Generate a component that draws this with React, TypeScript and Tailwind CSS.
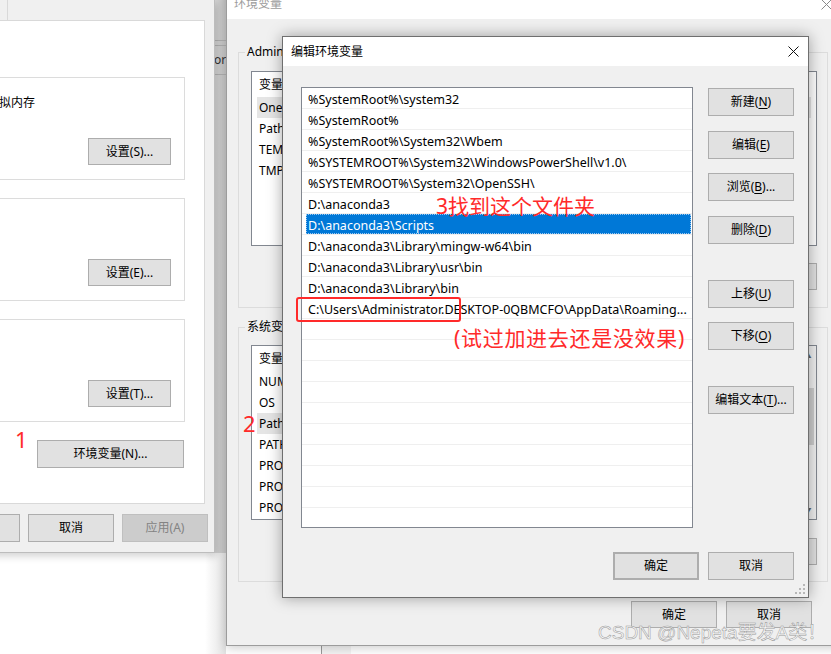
import React from 'react';

const FONT = "font-['Noto_Sans','Noto_Sans_CJK_SC',sans-serif]";

function CloseIcon({ color }: { color: string }) {
  return (
    <svg width="11" height="11" viewBox="0 0 11 11">
      <path d="M0.5 0.5L10.5 10.5M10.5 0.5L0.5 10.5" stroke={color} strokeWidth="1" fill="none" />
    </svg>
  );
}

function Btn({
  children, className = '', disabled = false,
}: { children: React.ReactNode; className?: string; disabled?: boolean }) {
  return (
    <div
      className={`flex shrink-0 items-center justify-center border text-[12px] leading-none ${
        disabled ? 'bg-[#cccccc] border-[#bfbfbf] text-[#838383]' : 'bg-[#e1e1e1] border-[#adadad] text-black'
      } ${className}`}
    >
      {children}
    </div>
  );
}

function Key({ k }: { k: string }) {
  return <span className="underline underline-offset-2">{k}</span>;
}

const dialogPaths = [
  '%SystemRoot%\\system32',
  '%SystemRoot%',
  '%SystemRoot%\\System32\\Wbem',
  '%SYSTEMROOT%\\System32\\WindowsPowerShell\\v1.0\\',
  '%SYSTEMROOT%\\System32\\OpenSSH\\',
  'D:\\anaconda3',
  'D:\\anaconda3\\Scripts',
  'D:\\anaconda3\\Library\\mingw-w64\\bin',
  'D:\\anaconda3\\Library\\usr\\bin',
  'D:\\anaconda3\\Library\\bin',
  'C:\\Users\\Administrator.DESKTOP-0QBMCFO\\AppData\\Roaming...',
];

const userVars = [
  { name: 'OneDrive', value: 'C:\\Users\\Administrator\\OneDrive', sel: true },
  { name: 'Path', value: 'C:\\Users\\Administrator\\AppData\\Local\\Microsoft\\WindowsApps;' },
  { name: 'TEMP', value: 'C:\\Users\\Administrator\\AppData\\Local\\Temp' },
  { name: 'TMP', value: 'C:\\Users\\Administrator\\AppData\\Local\\Temp' },
];

const sysVars = [
  { name: 'NUMBER_OF_PROCESSORS', value: '8' },
  { name: 'OS', value: 'Windows_NT' },
  { name: 'Path', value: 'C:\\Windows\\system32;C:\\Windows;C:\\Windows\\System32\\Wbem;', sel: true },
  { name: 'PATHEXT', value: '.COM;.EXE;.BAT;.CMD;.VBS;.VBE;.JS;.JSE;.WSF;.WSH;.MSC' },
  { name: 'PROCESSOR_ARCHITECTURE', value: 'AMD64' },
  { name: 'PROCESSOR_IDENTIFIER', value: 'Intel64 Family 6 Model 158 Stepping 10, GenuineIntel' },
  { name: 'PROCESSOR_LEVEL', value: '6' },
];

function VarList({
  rows, scroll = false,
}: { rows: { name: string; value: string; sel?: boolean }[]; scroll?: boolean }) {
  return (
    <div className="flex h-[175px] ml-[12px] mr-[10px] border border-[#828790] bg-white overflow-hidden">
      <div className="flex-1 flex flex-col">
        <div className="h-[25px] shrink-0 flex items-center pl-[7px]">
          <span className="w-[150px]">变量</span>
          <span>值</span>
        </div>
        {rows.map((r) => (
          <div
            key={r.name}
            className={`h-[21px] shrink-0 flex items-center mx-[5px] pl-[2px] whitespace-nowrap overflow-hidden ${r.sel ? 'bg-[#e5e5e5]' : ''}`}
          >
            <span className="w-[150px] shrink-0">{r.name}</span>
            <span>{r.value}</span>
          </div>
        ))}
      </div>
      {scroll && (
        <div className="w-[17px] shrink-0 flex flex-col items-center bg-[#f0f0f0]">
          <div className="h-[17px] flex items-center justify-center text-[#606060] text-[8px]">▲</div>
          <div className="mt-[25px] w-[13px] h-[57px] bg-[#cdcdcd]" />
          <div className="flex-1" />
          <div className="h-[17px] flex items-center justify-center text-[#606060] text-[8px]">▼</div>
        </div>
      )}
    </div>
  );
}

function App() {
  return (
    <div className={`relative w-[831px] h-[654px] overflow-hidden bg-white text-[12px] text-black ${FONT}`}>
      {/* window partly seen behind the two dialogs */}
      <div className="absolute left-[205px] top-0 w-[21px] h-[553px] bg-gradient-to-r from-[#e4e4e4] to-[#c4c4c4] flex flex-col">
        <div className="mt-[40px] h-[6px] border-y border-[#b0b0b0]" />
        <div className="mt-[6px] pl-[9px] text-[#333] leading-[16px] whitespace-nowrap overflow-hidden">or</div>
        <div className="mt-[6px] border-t border-[#b0b0b0]" />
      </div>
      <div className="absolute left-[205px] top-[553px] w-[21px] h-[101px] bg-gradient-to-r from-white to-[#e2e2e2]" />
      <div className="absolute left-[321px] top-[600px] w-[30px] h-[60px] border-l border-[#9a9a9a] bg-[#f4f4f4]" />

      {/* 系统属性 */}
      <div className="absolute left-[-60px] top-0 w-[275px] h-[553px] flex flex-col bg-[#f0f0f0] border-r border-b border-[#bdbdbd] shadow-[2px_3px_8px_rgba(0,0,0,0.18)]">
        <div className="h-[20px] shrink-0 flex">
          <div className="w-[68px] border-r border-[#d9d9d9]" />
        </div>
        <div className="ml-[26px] mr-[9px] h-[484px] shrink-0 bg-white border border-[#d9d9d9] flex flex-col">
          {[
            { text: '虚拟内存', btn: 'S', mt: 'mt-[56px]' },
            { text: '', btn: 'E', mt: 'mt-[18px]' },
            { text: '', btn: 'T', mt: 'mt-[18px]' },
          ].map((g) => (
            <div key={g.btn} className={`${g.mt} ml-[10px] mr-[19px] border border-[#dcdcdc] pt-[17px] pb-[14px] pl-[9px] pr-[13px] flex flex-col`}>
              <div className="h-[16px] leading-[16px] whitespace-nowrap">{g.text}</div>
              <Btn className="self-end mt-[27px] w-[83px] h-[27px]">
                设置({g.btn})...
              </Btn>
            </div>
          ))}
          <Btn className="self-end mt-[18px] mr-[20px] w-[147px] h-[28px]">环境变量(N)...</Btn>
        </div>
        <div className="mt-[10px] flex justify-end gap-[8px] pr-[6px]">
          <Btn className="w-[86px] h-[28px]">确定</Btn>
          <Btn className="w-[86px] h-[28px]">取消</Btn>
          <Btn disabled className="w-[86px] h-[28px]">应用(A)</Btn>
        </div>
      </div>

      {/* 环境变量 */}
      <div className="absolute left-[226px] top-[-12px] w-[616px] flex flex-col bg-[#f0f0f0] border border-[#9c9c9c] shadow-[0_2px_10px_rgba(0,0,0,0.2)]">
        <div className="h-[30px] shrink-0 bg-white flex items-center justify-between pl-[7px] pr-[9px]">
          <span className="text-[#9c9c9c]">环境变量</span>
          <CloseIcon color="#8a8a8a" />
        </div>
        <div className="flex flex-col pl-[11px] pr-[13px] pb-[17px]">
          <fieldset className="mt-[25px] border border-[#dcdcdc] p-0 min-w-0">
            <legend className="ml-[6px] px-[2px] leading-[16px]">Administrator 的用户变量(U)</legend>
            <div className="mt-[11px]">
              <VarList rows={userVars} />
            </div>
            <div className="mt-[17px] mb-[17px] mr-[10px] flex justify-end gap-[9px]">
              <Btn className="w-[86px] h-[27px]">新建(N)...</Btn>
              <Btn className="w-[86px] h-[27px]">编辑(E)...</Btn>
              <Btn className="w-[86px] h-[27px]">删除(D)</Btn>
            </div>
          </fieldset>
          <fieldset className="mt-[11px] border border-[#dcdcdc] p-0 min-w-0">
            <legend className="ml-[6px] px-[2px] leading-[16px]">系统变量(S)</legend>
            <div className="mt-[10px]">
              <VarList rows={sysVars} scroll />
            </div>
            <div className="mt-[18px] mb-[16px] mr-[10px] flex justify-end gap-[9px]">
              <Btn className="w-[86px] h-[27px]">新建(W)...</Btn>
              <Btn className="w-[86px] h-[27px]">编辑(I)...</Btn>
              <Btn className="w-[86px] h-[27px]">删除(L)</Btn>
            </div>
          </fieldset>
          <div className="mt-[19px] mr-[16px] flex justify-end gap-[9px]">
            <Btn className="w-[86px] h-[27px]">确定</Btn>
            <Btn className="w-[86px] h-[27px]">取消</Btn>
          </div>
        </div>
      </div>

      {/* 编辑环境变量 */}
      <div className="absolute left-[282px] top-[36px] w-[527px] h-[562px] flex flex-col bg-[#f0f0f0] border border-[#6f6f6f] shadow-[0_0_14px_rgba(0,0,0,0.35)]">
        <div className="h-[29px] shrink-0 bg-white flex items-center justify-between pl-[8px] pr-[9px]">
          <span>编辑环境变量</span>
          <CloseIcon color="#111111" />
        </div>
        <div className="mt-[21px] ml-[18px] flex">
          <div className="w-[392px] h-[441px] border border-[#828790] bg-white overflow-hidden flex flex-col text-[12.5px]">
            {Array.from({ length: 21 }).map((_, i) => {
              const p = dialogPaths[i] ?? '';
              const sel = i === 6;
              return (
                <div key={i} className="h-[21px] shrink-0 border-b border-[#efefef] pl-[4px] pr-[1px]">
                  <div
                    className={`h-full pl-[2px] pt-[2px] leading-[20px] whitespace-nowrap overflow-hidden ${
                      sel ? 'bg-[#0078d7] text-white outline-1 outline-dotted outline-[#9cc8f0] -outline-offset-1' : ''
                    }`}
                  >
                    {p}
                  </div>
                </div>
              );
            })}
          </div>
          <div className="ml-[15px] w-[86px] flex flex-col">
            <Btn className="mt-[1px] w-[86px] h-[28px]">新建(<Key k="N" />)</Btn>
            <Btn className="mt-[15px] w-[86px] h-[28px]">编辑(<Key k="E" />)</Btn>
            <Btn className="mt-[14px] w-[86px] h-[28px]">浏览(<Key k="B" />)...</Btn>
            <Btn className="mt-[15px] w-[86px] h-[28px]">删除(<Key k="D" />)</Btn>
            <Btn className="mt-[36px] w-[86px] h-[28px]">上移(<Key k="U" />)</Btn>
            <Btn className="mt-[14px] w-[86px] h-[28px]">下移(<Key k="O" />)</Btn>
            <Btn className="mt-[36px] w-[86px] h-[28px]">编辑文本(<Key k="T" />)...</Btn>
          </div>
        </div>
        <div className="mt-[24px] pr-[14px] flex justify-end gap-[9px]">
          <Btn className="w-[86px] h-[28px] border-2 border-[#0078d7]">确定</Btn>
          <Btn className="w-[86px] h-[28px]">取消</Btn>
        </div>
        <svg className="absolute right-[3px] bottom-[3px]" width="10" height="10" viewBox="0 0 10 10">
          <g fill="#b8b8b8">
            <rect x="8" y="0" width="2" height="2" />
            <rect x="4" y="4" width="2" height="2" />
            <rect x="8" y="4" width="2" height="2" />
            <rect x="0" y="8" width="2" height="2" />
            <rect x="4" y="8" width="2" height="2" />
            <rect x="8" y="8" width="2" height="2" />
          </g>
        </svg>
      </div>

      {/* annotations */}
      <div className="absolute left-[15px] top-[428px] text-[22px] leading-[22px] text-[#ff2a2a]">1</div>
      <div className="absolute left-[243px] top-[412px] text-[22px] leading-[22px] text-[#ff2a2a]">2</div>
      <div className="absolute left-[436px] top-[194px] text-[21px] leading-[24px] text-[#ff2a2a] whitespace-nowrap">3找到这个文件夹</div>
      <div className="absolute left-[296px] top-[297px] w-[165px] h-[25px] border-2 border-[#ff2a2a] rounded-[3px]" />
      <div className="absolute left-[454px] top-[325px] text-[21px] leading-[26px] tracking-[0.7px] text-[#ff2a2a] whitespace-nowrap">(试过加进去还是没效果)</div>

      <div className="absolute left-[598px] top-[621px] text-[19px] leading-[24px] whitespace-nowrap font-['Liberation_Sans','Noto_Sans_CJK_SC',sans-serif] text-[#fafafa] [-webkit-text-stroke:0.5px_#979797]">
        CSDN @Nepeta要发A类！
      </div>
    </div>
  );
}

export default App;
